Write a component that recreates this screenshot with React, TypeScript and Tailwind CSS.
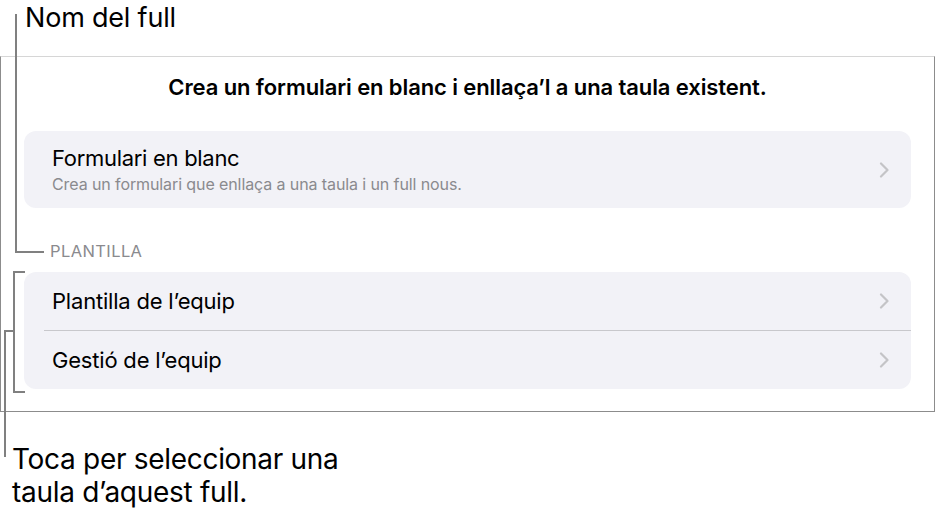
// Rows inside the template card
const templates = [
  { name: "Plantilla de l’equip" },
  { name: "Gestió de l’equip" },
];

const Chevron = () => (
  <svg width="10" height="16" viewBox="0 0 10 16" className="shrink-0">
    <path d="M2 1.5 L8.5 8 L2 14.5" fill="none" stroke="#c4c4c7" strokeWidth="2.2" strokeLinecap="round" strokeLinejoin="round" />
  </svg>
);

const App = () => {
  return (
    <div className="relative w-[935px] h-[513px] bg-white overflow-hidden font-['Inter','Liberation_Sans',sans-serif] text-black">
      {/* Callout label on top */}
      <div className="h-[56px] pl-[25px] pt-[2px] text-[27px] leading-[32px] tracking-[-0.2px]">Nom del full</div>

      {/* Sheet panel */}
      <div className="h-[356px] border-t border-t-[#d6d6d6] border-x border-b border-x-[#8c8c8c] border-b-[#8c8c8c] px-[23px] pt-[16px]">
        <h1 className="text-center text-[22px] leading-[28px] font-semibold tracking-[-0.1px]">
          Crea un formulari en blanc i enllaça’l a una taula existent.
        </h1>

        <div className="mt-[30px] h-[77px] rounded-[12px] bg-[#f2f2f7] flex items-center pl-[28px] pr-[22px]">
          <div className="flex-1">
            <div className="text-[22px] leading-[26px] tracking-[-0.3px]">Formulari en blanc</div>
            <div className="mt-[3px] text-[16px] leading-[20px] text-[#8a8a8e] tracking-[-0.1px]">
              Crea un formulari que enllaça a una taula i un full nous.
            </div>
          </div>
          <Chevron />
        </div>

        <div className="mt-[33px] mb-[11px] pl-[26px] text-[16.5px] leading-[20px] text-[#8a8a8e] tracking-[0.4px]">PLANTILLA</div>

        <div className="rounded-[12px] bg-[#f2f2f7] overflow-hidden">
          {templates.map((item, idx) => (
            <div key={idx} className={idx > 0 ? "ml-[20px] border-t border-[#c8c8cc]" : "ml-[20px]"}>
              <div className="h-[58px] flex items-center pl-[8px] pr-[22px]">
                <span className="flex-1 text-[22px] leading-[26px] tracking-[-0.2px]">{item.name}</span>
                <Chevron />
              </div>
            </div>
          ))}
        </div>
      </div>

      {/* Callout label below */}
      <div className="pl-[12px] pt-[31px] text-[28px] leading-[33px] tracking-[-0.3px]">
        Toca per seleccionar una
        <br />
        taula d’aquest full.
      </div>

      {/* Annotation lines */}
      <svg className="absolute inset-0 pointer-events-none" width="935" height="513" viewBox="0 0 935 513">
        <g fill="none" stroke="#808080" strokeWidth="2">
          <path d="M16 14 V252 H44" />
          <path d="M25 272 H14 V392 H25" />
          <path d="M14 331 H5 V457" />
        </g>
      </svg>
    </div>
  );
};

export default App;
